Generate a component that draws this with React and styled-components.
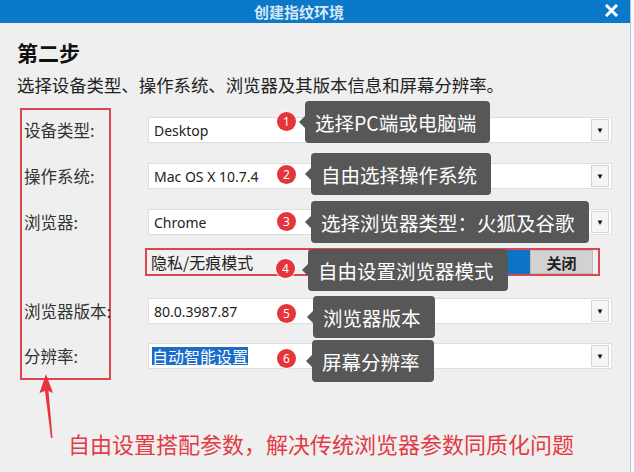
import React from "react";
import styled, { createGlobalStyle } from "styled-components";

const GlobalStyle = createGlobalStyle`
  html, body {
    margin: 0;
    padding: 0;
    background: #f6f8fa;
  }
  * { box-sizing: border-box; }
`;

const CJK = `"Noto Sans CJK SC", "Noto Sans", sans-serif`;

const Page = styled.div`
  display: flex;
  width: 634px;
  height: 472px;
  overflow: hidden;
`;

const Dialog = styled.div`
  position: relative;
  width: 631px;
  height: 472px;
  background: #efefef;
  border-right: 1px solid #b8c7d6;
  display: flex;
  flex-direction: column;
`;

const TitleBar = styled.div`
  height: 23px;
  background: #0b79c9;
  display: flex;
  align-items: center;
  justify-content: center;
  padding: 0 32px 0 0;
  position: relative;
`;

const Title = styled.div`
  font-family: ${CJK};
  font-weight: 700;
  font-size: 15px;
  line-height: 17px;
  color: #d8e7f4;
`;

const CloseBtn = styled.div`
  position: absolute;
  right: 12px;
  top: 4px;
  width: 13px;
  height: 13px;
  display: flex;
`;

const Body = styled.div`
  padding-left: 17px;
  display: flex;
  flex-direction: column;
`;

const Heading = styled.h1`
  margin: 17px 0 0 0;
  font-family: ${CJK};
  font-size: 21px;
  line-height: 25px;
  font-weight: 700;
  color: #111;
`;

const Desc = styled.p`
  margin: 8px 0 0 0;
  font-family: ${CJK};
  font-size: 17.4px;
  line-height: 24px;
  color: #222;
`;

const Form = styled.div`
  margin: 11px 0 0 3px;
  display: flex;
  gap: 37px;
`;

const LabelBox = styled.div`
  width: 91px;
  height: 272px;
  border: 2px solid #d9474f;
  display: flex;
  flex-direction: column;
  padding-left: 2px;
`;

const Row = styled.div`
  height: ${(p) => p.h}px;
  display: flex;
  align-items: center;
`;

const Label = styled.span`
  font-family: ${CJK};
  font-size: 16.5px;
  color: #333;
  white-space: nowrap;
`;

const FieldColumn = styled.div`
  display: flex;
  flex-direction: column;
  padding-top: 2px;
`;

const Select = styled.div`
  position: relative;
  width: 464px;
  height: 26px;
  background: #fff;
  border: 1px solid #dedede;
  display: flex;
  align-items: center;
  justify-content: space-between;
  padding: 0 2px 0 5px;
`;

const Value = styled.span`
  font-family: "Noto Sans", ${CJK};
  font-size: 14px;
  color: #222;
`;

const Selected = styled.span`
  font-family: ${CJK};
  font-size: 16px;
  line-height: 18px;
  background: #1a6cc8;
  color: #fff;
  margin-left: -2px;
`;

const DropBtn = styled.div`
  width: 18px;
  height: 22px;
  border: 1px solid #d4d4d4;
  background: #f5f5f5;
  display: flex;
  align-items: center;
  justify-content: center;
  font-size: 8px;
  color: #111;
`;

const SwitchRow = styled.div`
  position: relative;
  width: 455px;
  height: 28px;
  margin-left: -3px;
  border: 2px solid #d9474f;
  background: #f1f1f1;
  display: flex;
  align-items: center;
  padding: 0 5px 0 4px;
`;

const SwitchLabel = styled.span`
  font-family: ${CJK};
  font-size: 16px;
  color: #222;
  flex: 1;
`;

const Toggle = styled.div`
  display: flex;
  height: 24px;
`;

const ToggleOn = styled.div`
  width: 33px;
  background: #0b74c4;
`;

const ToggleOff = styled.div`
  width: 63px;
  background: #d2d2d2;
  border: 1px solid #bdbdbd;
  display: flex;
  align-items: center;
  justify-content: center;
  font-family: ${CJK};
  font-weight: 700;
  font-size: 15px;
  color: #222;
`;

const Badge = styled.div`
  position: absolute;
  left: ${(p) => p.x}px;
  top: ${(p) => p.y}px;
  width: 19px;
  height: 19px;
  border-radius: 50%;
  background: #e3353a;
  color: #fff;
  font-family: "Noto Sans", sans-serif;
  font-size: 12px;
  line-height: 19px;
  text-align: center;
  box-shadow: 0 0 0 1px rgba(255, 255, 255, 0.7);
`;

const Tip = styled.div`
  position: absolute;
  left: ${(p) => p.x}px;
  top: ${(p) => p.y}px;
  height: 42px;
  padding: 0 14px 0 10px;
  background: #575757;
  border-radius: 4px;
  display: flex;
  align-items: center;
  font-family: ${CJK};
  font-size: 19.5px;
  color: #fff;
  white-space: nowrap;
  z-index: 2;

  &::before {
    content: "";
    position: absolute;
    left: -6px;
    top: 50%;
    margin-top: -6px;
    border-style: solid;
    border-width: 6px 6px 6px 0;
    border-color: transparent #575757 transparent transparent;
  }
`;

const Footer = styled.div`
  margin: 48px 0 0 51px;
  font-family: ${CJK};
  font-size: 22px;
  line-height: 30px;
  color: #e23b45;
`;

const Arrow = styled.svg`
  position: absolute;
  left: 38px;
  top: 372px;
`;

const rows = [
  { label: "设备类型:", h: 40, value: "Desktop", tip: "选择PC端或电脑端", n: 1, tx: 156, ty: -17, bx: 128, by: -6 },
  { label: "操作系统:", h: 52, value: "Mac OS X 10.7.4", tip: "自由选择操作系统", n: 2, tx: 162, ty: -11, bx: 128, by: 1 },
  { label: "浏览器:", h: 40, value: "Chrome", tip: "选择浏览器类型：火狐及谷歌", n: 3, tx: 162, ty: -9, bx: 128, by: 2 },
  { label: "", h: 40, switchRow: true, tip: "自由设置浏览器模式", n: 4, tx: 161, ty: -1, bx: 129, by: 9 },
  { label: "浏览器版本:", h: 58, value: "80.0.3987.87", tip: "浏览器版本", n: 5, tx: 164, ty: -3, bx: 128, by: 5 },
  { label: "分辨率:", h: 32, selected: "自动智能设置", tip: "屏幕分辨率", n: 6, tx: 163, ty: -4, bx: 128, by: 5 },
];

const Overlay = ({ r }) => (
  <>
    <Badge x={r.bx} y={r.by}>{r.n}</Badge>
    <Tip x={r.tx} y={r.ty}>{r.tip}</Tip>
  </>
);

const Field = ({ r }) => {
  if (r.switchRow) {
    return (
      <SwitchRow>
        <SwitchLabel>隐私/无痕模式</SwitchLabel>
        <Toggle>
          <ToggleOn />
          <ToggleOff>关闭</ToggleOff>
        </Toggle>
        <Overlay r={r} />
      </SwitchRow>
    );
  }
  return (
    <Select>
      {r.selected ? <Selected>{r.selected}</Selected> : <Value>{r.value}</Value>}
      <DropBtn>▼</DropBtn>
      <Overlay r={r} />
    </Select>
  );
};

export default function App() {
  return (
    <Page>
      <GlobalStyle />
      <Dialog>
        <TitleBar>
          <Title>创建指纹环境</Title>
          <CloseBtn>
            <svg width="13" height="13" viewBox="0 0 13 13">
              <path d="M2 2 L11 11 M11 2 L2 11" stroke="#fff" strokeWidth="3" strokeLinecap="square" />
            </svg>
          </CloseBtn>
        </TitleBar>
        <Body>
          <Heading>第二步</Heading>
          <Desc>选择设备类型、操作系统、浏览器及其版本信息和屏幕分辨率。</Desc>
          <Form>
            <LabelBox>
              {rows.map((r) => (
                <Row key={r.n} h={r.h}>
                  <Label>{r.label}</Label>
                </Row>
              ))}
            </LabelBox>
            <FieldColumn>
              {rows.map((r) => (
                <Row key={r.n} h={r.h}>
                  <Field r={r} />
                </Row>
              ))}
            </FieldColumn>
          </Form>
          <Footer>自由设置搭配参数，解决传统浏览器参数同质化问题</Footer>
        </Body>
        <Arrow width="20" height="68" viewBox="0 0 20 68">
          <polygon points="8,2 15,21 10.5,19 14.5,66 13,66 7,19 1.5,21" fill="#e8333c" />
        </Arrow>
      </Dialog>
    </Page>
  );
}
